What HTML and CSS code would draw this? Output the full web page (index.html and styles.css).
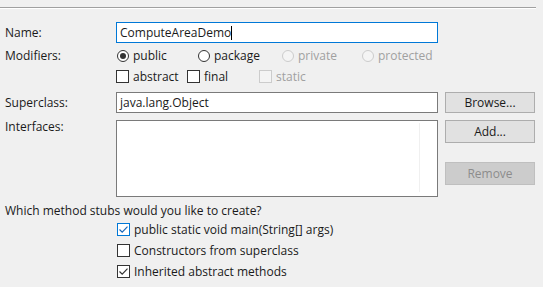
FILE: index.html
```html
<!DOCTYPE html>
<html lang="en">
<head>
    <meta charset="UTF-8">
    <title>New Java Class</title>
    <link rel="stylesheet" href="styles.css">
</head>
<body>
    <div class="separator"></div>

    <div class="form">
        <div class="row row-name">
            <div class="label">Name:</div>
            <div class="field focused">ComputeAreaDemo<span class="caret"></span></div>
        </div>

        <div class="row row-radios">
            <div class="label">Modifiers:</div>
            <div class="options">
                <span class="opt w-public"><span class="radio checked"></span>public</span>
                <span class="opt w-package"><span class="radio"></span>package</span>
                <span class="opt w-private disabled"><span class="radio"></span>private</span>
                <span class="opt disabled"><span class="radio"></span>protected</span>
            </div>
        </div>

        <div class="row row-checks">
            <div class="label"></div>
            <div class="options">
                <span class="opt w-abstract"><span class="check"></span>abstract</span>
                <span class="opt w-final"><span class="check"></span>final</span>
                <span class="opt disabled"><span class="check"></span>static</span>
            </div>
        </div>

        <div class="row row-super">
            <div class="label">Superclass:</div>
            <div class="field">java.lang.Object</div>
            <button class="btn">Browse...</button>
        </div>

        <div class="row row-ifaces">
            <div class="label">Interfaces:</div>
            <div class="list"><div class="list-col"></div></div>
            <div class="btn-col">
                <button class="btn">Add...</button>
                <button class="btn" disabled>Remove</button>
            </div>
        </div>

        <div class="question">Which method stubs would you like to create?</div>

        <div class="stubs">
            <span class="opt"><span class="check checked focus-check">
                <svg width="13" height="13" viewBox="0 0 13 13"><path d="M2.5 6.5 L5.2 9.2 L10.5 3.6" fill="none" stroke="#1a67b8" stroke-width="1.2"/></svg>
            </span>public static void main(String[] args)</span>
            <span class="opt"><span class="check"></span>Constructors from superclass</span>
            <span class="opt"><span class="check checked">
                <svg width="13" height="13" viewBox="0 0 13 13"><path d="M2.5 6.5 L5.2 9.2 L10.5 3.6" fill="none" stroke="#333" stroke-width="1.2"/></svg>
            </span>Inherited abstract methods</span>
        </div>
    </div>
</body>
</html>
```

FILE: styles.css
```css
body {
    margin: 0;
    padding: 0;
    background: #f0f0f0;
    font-family: "Open Sans", "Noto Sans", sans-serif;
    font-size: 12px;
    color: #1a1a1a;
    width: 543px;
    height: 287px;
    overflow: hidden;
}

.separator {
    margin-top: 7px;
    width: 536px;
    height: 1px;
    background: #a0a0a0;
    border-bottom: 1px solid #ffffff;
}

.form {
    padding-top: 13px;
}

.row {
    display: flex;
    align-items: flex-start;
}

.label {
    width: 111px;
    padding-left: 5px;
    flex-shrink: 0;
}

.row-name {
    height: 21px;
}

.row-name .label,
.row-super .label {
    line-height: 21px;
}

.field {
    box-sizing: border-box;
    width: 322px;
    height: 21px;
    background: #ffffff;
    border: 1px solid #7a7a7a;
    padding: 0 3px;
    line-height: 19px;
    white-space: nowrap;
}

.field.focused {
    border-color: #0078d7;
}

.caret {
    display: inline-block;
    width: 1px;
    height: 14px;
    background: #000;
    vertical-align: -3px;
}

.row-radios {
    margin-top: 4px;
    height: 17px;
    line-height: 17px;
}

.row-checks {
    margin-top: 4px;
    height: 17px;
    line-height: 17px;
}

.options {
    display: flex;
}

.opt {
    display: flex;
    align-items: center;
    white-space: nowrap;
}

.opt.disabled {
    color: #a0a0a0;
}

.w-public { width: 81px; }
.w-package { width: 84px; }
.w-private { width: 80px; }
.w-abstract { width: 71px; }
.w-final { width: 72px; }

.radio {
    box-sizing: border-box;
    width: 12px;
    height: 12px;
    border: 1px solid #333333;
    border-radius: 50%;
    background: #ffffff;
    margin: 0 4px 0 1px;
    display: flex;
    align-items: center;
    justify-content: center;
}

.radio.checked::after {
    content: "";
    width: 6px;
    height: 6px;
    border-radius: 50%;
    background: #333333;
}

.disabled .radio {
    border-color: #cccccc;
    background: #f4f4f4;
}

.check {
    box-sizing: border-box;
    width: 13px;
    height: 13px;
    border: 1px solid #333333;
    background: #ffffff;
    margin-right: 4px;
    position: relative;
}

.check svg {
    position: absolute;
    left: -1px;
    top: -1px;
}

.check.focus-check {
    border-color: #0078d7;
}

.disabled .check {
    border-color: #cccccc;
    background: #f4f4f4;
}

.row-super {
    margin-top: 7px;
    height: 21px;
}

.btn {
    box-sizing: border-box;
    margin-left: 7px;
    width: 90px;
    height: 21px;
    background: #e1e1e1;
    border: 1px solid #adadad;
    font-family: inherit;
    font-size: 12px;
    color: #1a1a1a;
    padding: 0;
}

.btn:disabled {
    background: #cccccc;
    border-color: #bfbfbf;
    color: #8c8c8c;
}

.row-ifaces {
    margin-top: 7px;
    height: 77px;
}

.row-ifaces .label {
    line-height: 14px;
}

.list {
    box-sizing: border-box;
    width: 322px;
    height: 77px;
    background: #ffffff;
    border: 1px solid #7a7a7a;
    position: relative;
}

.list-col {
    position: absolute;
    left: 302px;
    top: 2px;
    bottom: 4px;
    width: 1px;
    background: #f0f0f0;
}

.btn-col {
    display: flex;
    flex-direction: column;
}

.btn-col .btn {
    height: 23px;
}

.btn-col .btn + .btn {
    margin-top: 19px;
}

.question {
    margin-top: 5px;
    padding-left: 5px;
    line-height: 17px;
}

.stubs {
    display: flex;
    flex-direction: column;
    gap: 4px;
    padding-left: 117px;
    margin-top: 2px;
}

.stubs .opt {
    height: 17px;
}
```
